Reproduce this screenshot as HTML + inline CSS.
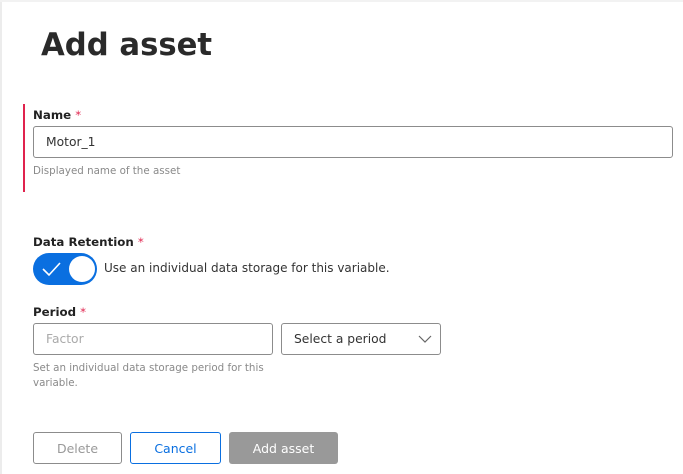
<!DOCTYPE html>
<html><head><style>
html,body{margin:0;padding:0;width:683px;height:474px;overflow:hidden;background:#fff;font-family:"DejaVu Sans","Liberation Sans",sans-serif;color:#222;}
.lb{position:absolute;left:0;top:0;width:2px;height:474px;background:#ececec}
.tb{position:absolute;left:0;top:0;width:683px;height:2px;background:#f2f2f2}
h1{position:absolute;left:41px;top:28px;margin:0;font-size:30.7px;font-weight:bold;color:#2a2a2a;letter-spacing:0}
.a{position:absolute}
.lbl{font-size:11.8px;font-weight:bold;color:#222}
.lbl span{color:#e0234d;font-weight:normal}
.inp{border:1px solid #8c8c8c;border-radius:3px;box-sizing:border-box;font-size:12.3px;padding-left:12px;line-height:31px}
.hint{font-size:10.3px;color:#8a8a8a;line-height:15px}
.btn{box-sizing:border-box;border-radius:3px;font-size:12.5px;text-align:center;line-height:31px}
</style></head><body>
<div class="lb"></div><div class="tb"></div>
<h1>Add asset</h1>
<div class="a" style="left:23px;top:104px;width:2px;height:88px;background:#e0234d"></div>
<div class="a lbl" style="left:33px;top:108px">Name <span>*</span></div>
<div class="a inp" style="left:33px;top:126px;width:640px;height:32px;color:#333">Motor_1</div>
<div class="a hint" style="left:33px;top:164px">Displayed name of the asset</div>
<div class="a lbl" style="left:33px;top:235px">Data Retention <span>*</span></div>
<div class="a" style="left:33px;top:253px;width:64px;height:32px;border-radius:16px;background:#0a6fe0"></div>
<svg class="a" style="left:40px;top:259px" width="24" height="20"><path d="M3 10 L9 16 L20 4" stroke="#fff" stroke-width="1.6" fill="none"/></svg>
<div class="a" style="left:69px;top:256px;width:26px;height:26px;border-radius:13px;background:#fff"></div>
<div class="a" style="left:104px;top:261px;font-size:12px;color:#333">Use an individual data storage for this variable.</div>
<div class="a lbl" style="left:33px;top:305px">Period <span>*</span></div>
<div class="a inp" style="left:33px;top:323px;width:240px;height:32px;color:#aaa">Factor</div>
<div class="a inp" style="left:281px;top:323px;width:160px;height:32px;color:#333">Select a period</div>
<svg class="a" style="left:418px;top:335px" width="14" height="9"><path d="M1 1 L7 7 L13 1" stroke="#666" stroke-width="1.2" fill="none"/></svg>
<div class="a hint" style="left:33px;top:361px">Set an individual data storage period for this<br>variable.</div>
<div class="a btn" style="left:33px;top:432px;width:89px;height:32px;border:1px solid #8c8c8c;color:#999">Delete</div>
<div class="a btn" style="left:130px;top:432px;width:91px;height:32px;border:1px solid #0a6fe0;color:#0a6fe0">Cancel</div>
<div class="a btn" style="left:229px;top:432px;width:109px;height:32px;background:#999;color:#fff;line-height:33px">Add asset</div>
</body></html>
